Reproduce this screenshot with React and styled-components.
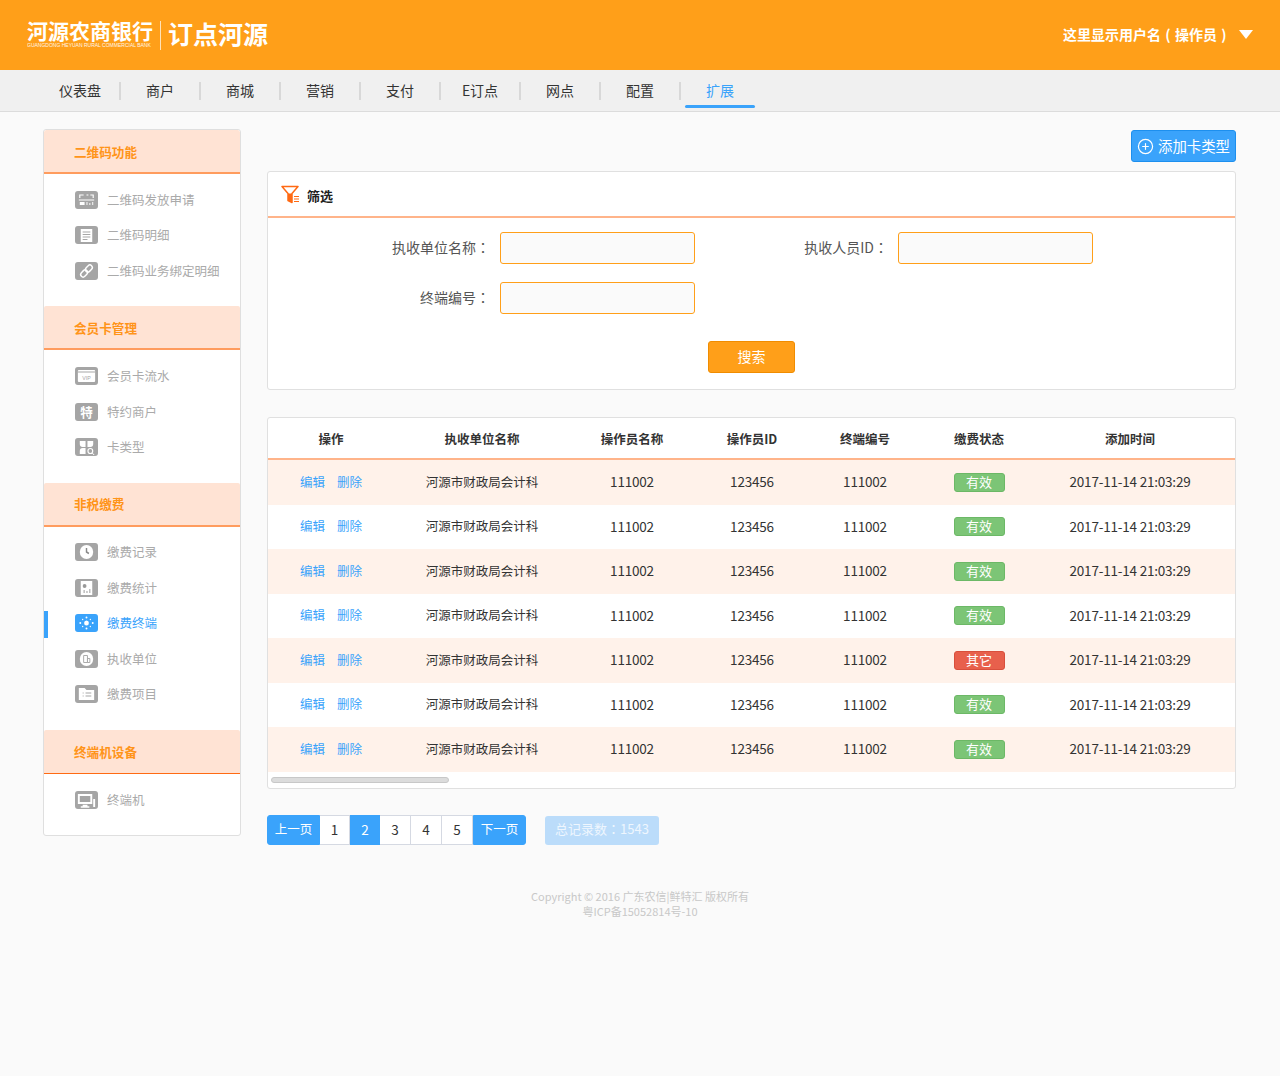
import React from 'react';
import styled, { createGlobalStyle } from 'styled-components';
import { CirclePlus } from 'lucide-react';

const GlobalStyle = createGlobalStyle`
	* {
		box-sizing: border-box;
	}

	body {
		margin: 0;
		background-color: #fafafa;
		color: #333;
		font-family: "Noto Sans CJK SC", "Noto Sans", sans-serif;
		font-size: 14px;
	}
`;

const Page = styled.div`
	min-height: 1076px;
`;

const Header = styled.header`
	display: flex;
	align-items: center;
	justify-content: space-between;
	height: 70px;
	padding: 0 27px;
	background-color: #ff9f19;
	color: #fff;
`;

const Logo = styled.div`
	display: flex;
	align-items: center;
	padding-bottom: 4px;
`;

const BankName = styled.div`
	display: flex;
	flex-direction: column;
	width: 127px;
`;

const BankTitle = styled.span`
	font-size: 21px;
	font-weight: 700;
	line-height: 24px;
	white-space: nowrap;
`;

const BankSub = styled.span`
	font-family: "Liberation Sans", sans-serif;
	font-size: 5px;
	line-height: 6px;
	white-space: nowrap;
	opacity: 0.9;
`;

const LogoDivider = styled.span`
	width: 1px;
	height: 29px;
	margin: 4px 7px 0 6px;
	background-color: #ffe2b8;
`;

const AppTitle = styled.span`
	padding-bottom: 1px;
	font-size: 25px;
	font-weight: 700;
	line-height: 30px;
	white-space: nowrap;
`;

const UserMenu = styled.div`
	display: flex;
	align-items: center;
	gap: 8px;
	padding-bottom: 2px;
	font-weight: 700;
	font-size: 14px;
`;

const Paren = styled.span`
	display: inline-block;
	width: 14px;
	text-align: center;
`;

const Punct = styled.span`
	font-family: "Noto Sans CJK TC", sans-serif;
`;

const Caret = styled.span`
	width: 0;
	height: 0;
	border-left: 7px solid transparent;
	border-right: 7px solid transparent;
	border-top: 9px solid #fff;
`;

const Nav = styled.nav`
	display: flex;
	height: 42px;
	padding: 12px 0 0 41px;
	background-color: #f0f0f0;
	border-bottom: 1px solid #dcdcdc;
`;

const NavItem = styled.a`
	position: relative;
	width: 80px;
	height: 18px;
	color: ${(p) => (p.$active ? '#3aa3fb' : '#333')};
	font-size: 14px;
	line-height: 16px;
	text-align: center;
	border-right: 2px solid ${(p) => (p.$last ? 'transparent' : '#d8d8d8')};

	&::after {
		content: '';
		display: ${(p) => (p.$active ? 'block' : 'none')};
		position: absolute;
		left: 4px;
		right: 4px;
		top: 23px;
		height: 3px;
		border-radius: 2px;
		background-color: #3aa3fb;
	}
`;

const Content = styled.div`
	display: flex;
	align-items: flex-start;
	gap: 26px;
	padding: 17px 44px 0 43px;
`;

const Sidebar = styled.aside`
	flex: 0 0 198px;
	background-color: #fff;
	border: 1px solid #dfdfdf;
	border-radius: 3px;
	overflow: hidden;
`;

const SectionHead = styled.h3`
	display: flex;
	align-items: center;
	height: 44px;
	margin: 0;
	padding-left: 30px;
	background-color: #ffe3d4;
	border-bottom: ${(p) => (p.$thin ? '1px solid #ff6a13' : '2px solid #ff9c5e')};
	border-radius: 2px 2px 0 0;
	color: #ff9419;
	font-size: 12.6px;
	font-weight: 700;
`;

const SectionList = styled.ul`
	margin: 0;
	padding: 8px 0 17.75px;
	list-style: none;
`;

const SideItem = styled.li`
	position: relative;
	display: flex;
	align-items: center;
	gap: 9px;
	height: 35.5px;
	padding-left: 31px;
	color: ${(p) => (p.$active ? '#3aa3fb' : '#aaa')};
	font-size: 12.5px;

	&::before {
		content: '';
		display: ${(p) => (p.$active ? 'block' : 'none')};
		position: absolute;
		left: 0;
		top: 5px;
		width: 4px;
		height: 27px;
		background-color: #3aa3fb;
	}
`;

const SideLabel = styled.span`
	padding-bottom: 1px;
`;

const Main = styled.main`
	flex: 0 0 969px;
	padding-top: 1px;
`;

const Toolbar = styled.div`
	display: flex;
	justify-content: flex-end;
	margin-bottom: 9px;
`;

const AddButton = styled.button`
	display: flex;
	align-items: center;
	gap: 4px;
	width: 105px;
	height: 32px;
	padding: 0 0 0 5px;
	background-color: #3aa3fb;
	border: 1px solid #1d8fee;
	border-radius: 3px;
	color: #fff;
	font: inherit;
	font-size: 14.4px;
`;

const AddLabel = styled.span`
	padding-bottom: 2px;
`;

const Panel = styled.section`
	width: 969px;
	background-color: #fff;
	border: 1px solid #e0e0e0;
	border-radius: 3px;
`;

const PanelHead = styled.div`
	display: flex;
	align-items: center;
	gap: 7px;
	height: 46px;
	padding-left: 13px;
	border-bottom: 2px solid #ffb48a;
	color: #222;
	font-size: 13px;
	font-weight: 700;
`;

const PanelTitle = styled.span`
	padding-top: 2px;
`;

const FilterForm = styled.form`
	display: grid;
	grid-template-columns: 232px 195px 203px 195px 1fr;
	row-gap: 18px;
	align-items: center;
	padding: 14px 0 16px;
`;

const FieldLabel = styled.label`
	grid-column: ${(p) => (p.$first ? '1' : 'auto')};
	padding: 0 10px 3px 0;
	color: #555;
	font-size: 14px;
	text-align: right;
`;

const TextInput = styled.input`
	width: 195px;
	height: 32px;
	background-color: #fafafa;
	border: 1px solid #ff9f19;
	border-radius: 3px;
`;

const FormActions = styled.div`
	grid-column: 1 / -1;
	display: flex;
	justify-content: center;
	margin-top: 9px;
`;

const SearchButton = styled.button`
	width: 87px;
	height: 32px;
	padding: 0 0 3px;
	background-color: #ff9f19;
	border: 1px solid #f08c00;
	border-radius: 3px;
	color: #fff;
	font: inherit;
`;

const TablePanel = styled(Panel)`
	margin-top: 27px;
`;

const columns = '126px 176px 124px 116px 110px 118px 184px 13px';

const HeadRow = styled.div`
	display: grid;
	grid-template-columns: ${columns};
	align-items: center;
	height: 42px;
	border-bottom: 2px solid #ffb48a;
	color: #333;
	font-size: 12.5px;
	font-weight: 700;
	text-align: center;
`;

const Row = styled.div`
	display: grid;
	grid-template-columns: ${columns};
	align-items: center;
	height: 44.5px;
	padding-bottom: 2px;
	background-color: ${(p) => (p.$odd ? '#fff2ea' : '#fff')};
	text-align: center;
	font-size: 12.5px;
`;

const Actions = styled.div`
	display: flex;
	justify-content: center;
	gap: 12px;
`;

const ActionLink = styled.a`
	color: #3aa3fb;
	font-size: 12.5px;
`;

const Mono = styled.span`
	font-size: 13.5px;
	letter-spacing: -0.2px;
`;

const StatusBadge = styled.span`
	display: block;
	width: 51px;
	height: 19px;
	margin: 2px auto 0;
	background-color: ${(p) => (p.$other ? '#e8604c' : '#7cc576')};
	border: 1px solid ${(p) => (p.$other ? '#d84f3c' : '#6cb866')};
	border-radius: 3px;
	color: #fff;
	font-size: 13px;
	line-height: 16px;
`;

const ScrollTrack = styled.div`
	height: 16.5px;
	padding: 5px 0 0 3px;
`;

const ScrollThumb = styled.div`
	width: 178px;
	height: 6px;
	background-color: #dcdcdc;
	border: 1px solid #c8c8c8;
	border-radius: 3px;
`;

const Pager = styled.div`
	display: flex;
	align-items: center;
	margin-top: 26px;
`;

const PageButton = styled.a`
	display: flex;
	align-items: center;
	justify-content: center;
	width: ${(p) => p.$w}px;
	height: 30px;
	padding-bottom: 3px;
	background-color: ${(p) => (p.$blue ? '#3aa3fb' : '#fff')};
	border: 1px solid ${(p) => (p.$blue ? '#3aa3fb' : '#d5d9e2')};
	border-left-width: ${(p) => (p.$blue ? 1 : 0)}px;
	border-radius: ${(p) => p.$radius || '0'};
	color: ${(p) => (p.$blue ? '#fff' : '#333')};
	font-size: ${(p) => (p.$wide ? 12.5 : 13.5)}px;
`;

const TotalBadge = styled.div`
	display: flex;
	align-items: center;
	justify-content: center;
	width: 114px;
	height: 29px;
	margin-left: 19px;
	padding-bottom: 3px;
	background-color: #bbdcfa;
	border-radius: 3px;
	color: #eef6fe;
	font-size: 13px;
`;

const Footer = styled.footer`
	margin-top: 44px;
	color: #c8c8c8;
	font-size: 11px;
	line-height: 15px;
	text-align: center;
`;

const GlyphBox = styled.svg`
	flex: none;
	display: block;
`;

const Glyph = ({ children, active }) => (
	<GlyphBox width="23" height="18" viewBox="0 0 24 18" preserveAspectRatio="none">
		<rect width="24" height="18" rx="3" fill={active ? '#3aa3fb' : '#a5a5a5'} />
		{children}
	</GlyphBox>
);

const icons = {
	qr: (
		<Glyph>
			<path d="M5 7V4h4M12 4h2M16 4h3v3M4 9h16" fill="none" stroke="#fff" strokeWidth="1.2" />
			<path d="M5 11h5v3H5zM12 11h1v3h-1zM15 12h1v2h-1zM18 11h1v3h-1z" fill="#fff" />
		</Glyph>
	),
	list: (
		<Glyph>
			<rect x="6" y="3" width="12" height="13" fill="#fff" />
			<path d="M8 6h8M8 8.500h8M8 11h8M8 13.500h5" stroke="#a5a5a5" />
		</Glyph>
	),
	link: (
		<Glyph>
			<g fill="none" stroke="#fff" strokeWidth="1.5" transform="rotate(-45 12 9)">
				<rect x="4.500" y="6.500" width="8" height="5" rx="2.500" />
				<rect x="11.500" y="6.500" width="8" height="5" rx="2.500" />
			</g>
		</Glyph>
	),
	vip: (
		<Glyph>
			<rect x="3" y="3" width="18" height="12" rx="1" fill="#fff" />
			<path d="M3 5h18" stroke="#a5a5a5" />
			<text x="12" y="13" fontSize="5.500" fontFamily="Liberation Sans" textAnchor="middle" fill="#a5a5a5">VIP</text>
		</Glyph>
	),
	special: (
		<Glyph>
			<text x="12" y="14" fontSize="13" fontWeight="700" fontFamily="Noto Sans CJK SC" textAnchor="middle" fill="#fff">特</text>
		</Glyph>
	),
	cards: (
		<Glyph>
			<path d="M5 3h6v6H8a3 3 0 0 1-3-3zM13 3h6v3a3 3 0 0 1-3 3h-3zM8 10h3v6H5v-3a3 3 0 0 1 3-3z" fill="#fff" />
			<circle cx="16" cy="13" r="2.500" fill="none" stroke="#fff" strokeWidth="1.2" />
			<path d="M18 15l2 2" stroke="#fff" />
		</Glyph>
	),
	clock: (
		<Glyph>
			<circle cx="12" cy="9" r="7" fill="#fff" />
			<path d="M12 5v4l2.500 1.500" fill="none" stroke="#888" strokeWidth="1.5" />
		</Glyph>
	),
	stat: (
		<Glyph>
			<rect x="6" y="2" width="12" height="14" fill="#fff" />
			<circle cx="10" cy="7" r="2" fill="#999" />
			<path d="M9 11h1v3H9zM12 12h1v2h-1zM15 10h1v4h-1z" fill="#999" />
		</Glyph>
	),
	terminal: (
		<Glyph active>
			<circle cx="12" cy="9" r="2.500" fill="#fff" />
			<g fill="#fff">
				<circle cx="12" cy="3.500" r="1" />
				<circle cx="12" cy="14.500" r="1" />
				<circle cx="5.500" cy="9" r="1" />
				<circle cx="18.500" cy="9" r="1" />
				<circle cx="8" cy="5.500" r=".7" />
				<circle cx="16" cy="5.500" r=".7" />
				<circle cx="8" cy="12.500" r=".7" />
				<circle cx="16" cy="12.500" r=".7" />
			</g>
		</Glyph>
	),
	unit: (
		<Glyph>
			<circle cx="12" cy="9" r="7" fill="#fff" />
			<path d="M9 5.500h4v7H9zM13 8.500h2.500v4H13z" fill="none" stroke="#aaa" />
		</Glyph>
	),
	folder: (
		<Glyph>
			<path d="M4 3h6l2 2h8v10H4z" fill="#fff" />
			<path d="M8 8h1M11 8h6M8 11h1M11 11h6" stroke="#a5a5a5" strokeWidth="1.200" />
		</Glyph>
	),
	monitor: (
		<Glyph>
			<rect x="3" y="3" width="15" height="10" fill="#fff" />
			<rect x="5" y="5" width="11" height="6" fill="#a5a5a5" />
			<path d="M8 14.500h5M6 16h9" stroke="#fff" strokeWidth="1.300" />
			<rect x="19" y="8" width="2" height="8" fill="#fff" />
		</Glyph>
	),
};

const FilterIcon = () => (
	<svg width="19" height="19" viewBox="0 0 19 19">
		<path d="M1 1.500h16L11 8.500v9l-4-2V8.500z" fill="none" stroke="#ff6a13" strokeWidth="1.500" strokeLinejoin="round" />
		<path d="M7 8.500h4v9l-4-2z" fill="#ff6a13" />
		<path d="M13 11.500h5M13 14h5M13 16.500h5" stroke="#ff6a13" strokeWidth="1.200" />
	</svg>
);

const navItems = ['仪表盘', '商户', '商城', '营销', '支付', 'E订点', '网点', '配置', '扩展'];

const sections = [
	{
		title: '二维码功能',
		items: [
			{ icon: 'qr', label: '二维码发放申请' },
			{ icon: 'list', label: '二维码明细' },
			{ icon: 'link', label: '二维码业务绑定明细' },
		],
	},
	{
		title: '会员卡管理',
		items: [
			{ icon: 'vip', label: '会员卡流水' },
			{ icon: 'special', label: '特约商户' },
			{ icon: 'cards', label: '卡类型' },
		],
	},
	{
		title: '非税缴费',
		items: [
			{ icon: 'clock', label: '缴费记录' },
			{ icon: 'stat', label: '缴费统计' },
			{ icon: 'terminal', label: '缴费终端', active: true },
			{ icon: 'unit', label: '执收单位' },
			{ icon: 'folder', label: '缴费项目' },
		],
	},
	{
		title: '终端机设备',
		thin: true,
		items: [{ icon: 'monitor', label: '终端机' }],
	},
];

const heads = ['操作', '执收单位名称', '操作员名称', '操作员ID', '终端编号', '缴费状态', '添加时间'];
const statuses = ['有效', '有效', '有效', '有效', '其它', '有效', '有效'];

const App = () => {
	return (
		<Page>
			<GlobalStyle />
			<Header>
				<Logo>
					<BankName>
						<BankTitle>河源农商银行</BankTitle>
						<BankSub>GUANGDONG HEYUAN RURAL COMMERCIAL BANK</BankSub>
					</BankName>
					<LogoDivider />
					<AppTitle>订点河源</AppTitle>
				</Logo>
				<UserMenu>
					<span>
						这里显示用户名<Paren>(</Paren>操作员<Paren>)</Paren>
					</span>
					<Caret />
				</UserMenu>
			</Header>
			<Nav>
				{navItems.map((item, i) => (
					<NavItem key={item} $active={i === 8} $last={i === 8}>
						{item}
					</NavItem>
				))}
			</Nav>
			<Content>
				<Sidebar>
					{sections.map((section) => (
						<div key={section.title}>
							<SectionHead $thin={section.thin}>{section.title}</SectionHead>
							<SectionList>
								{section.items.map((item) => (
									<SideItem key={item.label} $active={item.active}>
										{icons[item.icon]}
										<SideLabel>{item.label}</SideLabel>
									</SideItem>
								))}
							</SectionList>
						</div>
					))}
				</Sidebar>
				<Main>
					<Toolbar>
						<AddButton>
							<CirclePlus size={17} strokeWidth={1.7} />
							<AddLabel>添加卡类型</AddLabel>
						</AddButton>
					</Toolbar>
					<Panel>
						<PanelHead>
							<FilterIcon />
							<PanelTitle>筛选</PanelTitle>
						</PanelHead>
						<FilterForm>
							<FieldLabel>执收单位名称<Punct>：</Punct></FieldLabel>
							<TextInput />
							<FieldLabel>执收人员ID<Punct>：</Punct></FieldLabel>
							<TextInput />
							<FieldLabel $first>终端编号<Punct>：</Punct></FieldLabel>
							<TextInput />
							<FormActions>
								<SearchButton type="button">搜索</SearchButton>
							</FormActions>
						</FilterForm>
					</Panel>
					<TablePanel>
						<HeadRow>
							{heads.map((head) => (
								<div key={head}>{head}</div>
							))}
						</HeadRow>
						{statuses.map((status, i) => (
							<Row key={i} $odd={i % 2 === 0}>
								<Actions>
									<ActionLink>编辑</ActionLink>
									<ActionLink>删除</ActionLink>
								</Actions>
								<div>河源市财政局会计科</div>
								<Mono>111002</Mono>
								<Mono>123456</Mono>
								<Mono>111002</Mono>
								<StatusBadge $other={status === '其它'}>{status}</StatusBadge>
								<Mono>2017-11-14 21:03:29</Mono>
							</Row>
						))}
						<ScrollTrack>
							<ScrollThumb />
						</ScrollTrack>
					</TablePanel>
					<Pager>
						<PageButton $w={53} $blue $wide $radius="3px 0 0 3px">上一页</PageButton>
						<PageButton $w={30}>1</PageButton>
						<PageButton $w={30} $blue>2</PageButton>
						<PageButton $w={31}>3</PageButton>
						<PageButton $w={31}>4</PageButton>
						<PageButton $w={31}>5</PageButton>
						<PageButton $w={53} $blue $wide $radius="0 3px 3px 0">下一页</PageButton>
						<TotalBadge>总记录数<Punct>：</Punct>1543</TotalBadge>
					</Pager>
				</Main>
			</Content>
			<Footer>
				Copyright © 2016 广东农信|鲜特汇 版权所有
				<br />
				粤ICP备15052814号-10
			</Footer>
		</Page>
	);
};

export default App;
